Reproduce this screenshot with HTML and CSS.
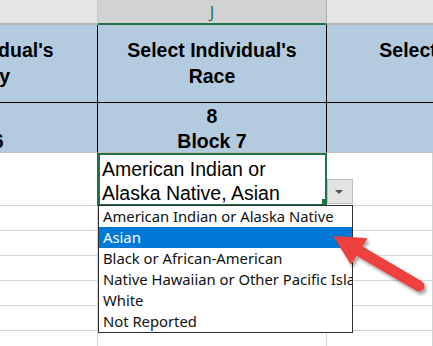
FILE: index.html
```html
<!DOCTYPE html>
<html lang="en">
<head>
    <meta charset="UTF-8">
    <meta name="viewport" content="width=device-width, initial-scale=1.0">
    <title>Race dropdown</title>
    <link rel="stylesheet" href="styles.css">
</head>
<body>
    <div class="sheet">
        <!-- column headers -->
        <div class="hd"></div>
        <div class="hd hd-active">J</div>
        <div class="hd hd-last"></div>

        <!-- row 1: titles -->
        <div class="cell title"><div class="wide wide-left">Select Individual's<br>Ethnicity</div></div>
        <div class="cell title"><div class="wide">Select Individual's<br>Race</div></div>
        <div class="cell title cell-last"><div class="wide wide-right">Select Individual's<br>Sex</div></div>

        <!-- row 2: block numbers -->
        <div class="cell block"><div class="wide wide-left">7<br>Block 6</div></div>
        <div class="cell block"><div class="wide">8<br>Block 7</div></div>
        <div class="cell block cell-last"></div>

        <!-- row 3: selected value -->
        <div class="cell grid"></div>
        <div class="cell active">American Indian or<br>Alaska Native, Asian</div>
        <div class="cell grid cell-last"></div>

        <div class="cell grid"></div><div class="cell grid"></div><div class="cell grid cell-last"></div>
        <div class="cell grid"></div><div class="cell grid"></div><div class="cell grid cell-last"></div>
        <div class="cell grid"></div><div class="cell grid"></div><div class="cell grid cell-last"></div>
        <div class="cell grid"></div><div class="cell grid"></div><div class="cell grid cell-last"></div>
        <div class="cell grid"></div><div class="cell grid"></div><div class="cell grid cell-last"></div>
        <div class="cell grid"></div><div class="cell grid"></div><div class="cell grid cell-last"></div>
    </div>

    <div class="fill-handle"></div>
    <div class="drop-btn"><span class="tri"></span></div>

    <ul class="drop-list">
        <li>American Indian or Alaska Native</li>
        <li class="selected">Asian</li>
        <li>Black or African-American</li>
        <li>Native Hawaiian or Other Pacific Islander</li>
        <li>White</li>
        <li>Not Reported</li>
    </ul>

    <svg class="arrow" width="433" height="346" viewBox="0 0 433 346">
        <defs>
            <filter id="shadow" x="-20%" y="-20%" width="140%" height="140%">
                <feDropShadow dx="2" dy="3" stdDeviation="1.6" flood-color="#000" flood-opacity="0.35"/>
            </filter>
        </defs>
        <g filter="url(#shadow)" fill="#ef3f3f" stroke="#ef3f3f">
            <line x1="419" y1="286" x2="356" y2="249" stroke-width="11" stroke-linecap="round"/>
            <polygon points="335,237 366,239 351,263" stroke-width="2" stroke-linejoin="round"/>
        </g>
    </svg>
</body>
</html>
```

FILE: styles.css
```css
/* page */
body {
    margin: 0;
    width: 433px;
    height: 346px;
    overflow: hidden;
    background-color: #ffffff;
    font-family: "Liberation Sans", Arial, sans-serif;
    color: #000000;
    position: relative;
}

.sheet {
    display: grid;
    grid-template-columns: 98px 229px 1fr;
    grid-template-rows: 25px 78px 50px 53px;
    grid-auto-rows: 25px;
}

/* column headers */
.hd {
    box-sizing: border-box;
    background-color: #e6e6e6;
    border-right: 1px solid #c4c4c4;
    border-bottom: 2px solid #b4b4b4;
}

.hd-active {
    background-color: #d2d2d2;
    border-right-color: #b0b0b0;
    border-bottom-color: #217346;
    color: #217346;
    font-family: "Open Sans", sans-serif;
    font-size: 17px;
    line-height: 23px;
    text-align: center;
}

.hd-last {
    border-right: none;
}

/* cells */
.cell {
    box-sizing: border-box;
    overflow: hidden;
    min-width: 0;
}

.title, .block {
    background-color: #b3cadf;
    border-right: 1px solid #000000;
    display: flex;
    flex-direction: column;
    justify-content: center;
    font-weight: bold;
    font-size: 19.5px;
    text-align: center;
}

.title {
    border-bottom: 1px solid #000000;
    line-height: 26px;
    padding-bottom: 1px;
}

.block {
    border-bottom: 1px solid #c2c2c2;
    line-height: 25px;
    padding-top: 2px;
}

.cell-last {
    border-right: none;
}

.wide {
    white-space: nowrap;
}

.wide-left, .wide-right {
    flex: none;
    width: 258px;
    align-self: flex-start;
}

.wide-left {
    margin-left: -160px;
}

.wide-right {
    margin-left: 8px;
}

.grid {
    border-right: 1px solid #d4d4d4;
    border-bottom: 1px solid #d4d4d4;
}

.active {
    border: 2px solid #217346;
    box-shadow: -1px 0 0 #217346;
    padding: 2px 0 0 2px;
    font-size: 19.5px;
    line-height: 24px;
    white-space: nowrap;
}

/* dropdown */
.fill-handle {
    position: absolute;
    left: 322px;
    top: 199px;
    width: 5px;
    height: 5px;
    background-color: #217346;
}

.drop-btn {
    position: absolute;
    left: 327px;
    top: 179px;
    width: 26px;
    height: 25px;
    box-sizing: border-box;
    background-color: #e3e3e3;
    border: 1px solid #bdbdbd;
    display: flex;
    align-items: center;
    justify-content: center;
}

.tri {
    width: 0;
    height: 0;
    border-left: 4px solid transparent;
    border-right: 4px solid transparent;
    border-top: 4px solid #555555;
    margin-left: -2px;
}

.drop-list {
    position: absolute;
    left: 98px;
    top: 205px;
    width: 255px;
    height: 128px;
    box-sizing: border-box;
    margin: 0;
    padding: 0;
    list-style: none;
    background-color: #ffffff;
    border: 1px solid #2e2e2e;
    overflow: hidden;
    font-family: "Noto Sans", sans-serif;
    font-size: 14.8px;
}

.drop-list li {
    height: 21px;
    line-height: 21px;
    padding-left: 4px;
    white-space: nowrap;
    color: #111111;
}

.drop-list .selected {
    background-color: #0078d7;
    color: #ffffff;
}

.arrow {
    position: absolute;
    left: 0;
    top: 0;
    pointer-events: none;
}
```
